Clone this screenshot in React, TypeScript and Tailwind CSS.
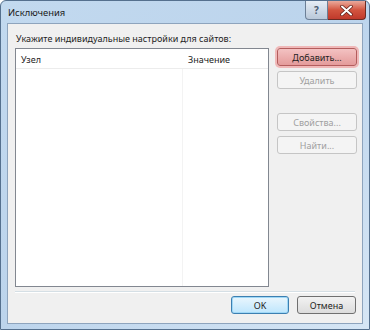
const font = { fontFamily: '"Noto Sans", "Open Sans", sans-serif' };

const Btn = ({ label, disabled, hot, focus }: { label: string; disabled?: boolean; hot?: boolean; focus?: boolean }) => {
  let cls = "border-[#707070] bg-gradient-to-b from-[#f2f2f2] to-[#dcdcdc] text-[#1e1e1e]";
  if (disabled) cls = "border-[#c5c5c5] bg-[#f4f4f4] text-[#a0a0a0]";
  if (hot) cls = "border-[#b35d5d] bg-gradient-to-b from-[#f3c2c2] to-[#e49b9b] text-[#1e1e1e] shadow-[0_0_0_2px_#f0b8b8]";
  if (focus) cls = "border-[#3c7fb1] bg-gradient-to-b from-[#eaf6fd] to-[#bee6fd] text-[#1e1e1e] shadow-[inset_0_0_0_1px_#9fd8f7]";
  return (
    <div className={`h-[18px] w-full rounded-[3px] border flex items-center justify-center text-[9px] leading-none ${cls}`}>
      {label}
    </div>
  );
};

export default function App() {
  return (
    <div style={font} className="w-[370px] h-[330px] overflow-hidden bg-white">
      <div className="w-[370px] h-[330px] rounded-t-[6px] border border-[#55708e] bg-gradient-to-br from-[#c2d9ef] via-[#bcd4ec] to-[#d6e6f5] flex flex-col">
        <div className="h-[22px] flex items-start">
          <div className="pl-[7px] pt-[5px] text-[9.4px] text-[#1a1a1a] flex-1">Исключения</div>
          <div className="flex mr-[3px]">
            <div className="w-[23px] h-[19px] rounded-bl-[4px] border border-t-0 border-[#6c7f96] bg-gradient-to-b from-[#e6edf5] to-[#b9c8d9] flex items-center justify-center text-[10px] text-[#4a5a70] font-bold">
              ?
            </div>
            <div className="w-[38px] h-[19px] rounded-br-[4px] border border-l-0 border-t-0 border-[#6b2a22] bg-gradient-to-b from-[#e9a99c] via-[#d2543f] to-[#c0392b] flex items-center justify-center">
              <svg width="13" height="11" viewBox="0 0 13 11">
                <path d="M2 1.5 L11 9.5 M11 1.5 L2 9.5" stroke="#5a1a14" strokeWidth="3.4" strokeLinecap="round" />
                <path d="M2 1.5 L11 9.5 M11 1.5 L2 9.5" stroke="#ffffff" strokeWidth="2" strokeLinecap="round" />
              </svg>
            </div>
          </div>
        </div>
        <div className="mx-[6px] h-[301px] border border-[#8ea4bd] bg-[#f0f0f0] flex flex-col">
          <div className="pl-[8px] pt-[8px] text-[9px] leading-[14px] text-[#1e1e1e]">
            Укажите индивидуальные настройки для сайтов:
          </div>
          <div className="flex mt-[1px] pl-[7px]">
            <div className="w-[254px] h-[239px] mt-[1px] border border-[#828790] bg-white flex flex-col">
              <div className="h-[20px] flex text-[9px] text-[#1e1e1e] items-center pt-[2px] border-b border-[#ececec]">
                <div className="w-[167px] pl-[5px]">Узел</div>
                <div className="pl-[5px]">Значение</div>
              </div>
              <div className="flex-1 flex">
                <div className="w-[167px] border-r border-[#f3f3f3]" />
              </div>
            </div>
            <div className="w-[80px] ml-[8px] flex flex-col pt-[1px]">
              <Btn label="Добавить..." hot />
              <div className="mt-[5px]">
                <Btn label="Удалить" disabled />
              </div>
              <div className="mt-[24px]">
                <Btn label="Свойства..." disabled />
              </div>
              <div className="mt-[5px]">
                <Btn label="Найти..." disabled />
              </div>
            </div>
          </div>
          <div className="mx-[7px] mt-[4px] h-[2px] border-t border-b border-t-[#d5dfe5] border-b-white" />
          <div className="flex justify-end gap-[8px] pr-[6px] mt-[3px]">
            <div className="w-[58px]">
              <Btn label="OK" focus />
            </div>
            <div className="w-[59px]">
              <Btn label="Отмена" />
            </div>
          </div>
        </div>
      </div>
    </div>
  );
}
